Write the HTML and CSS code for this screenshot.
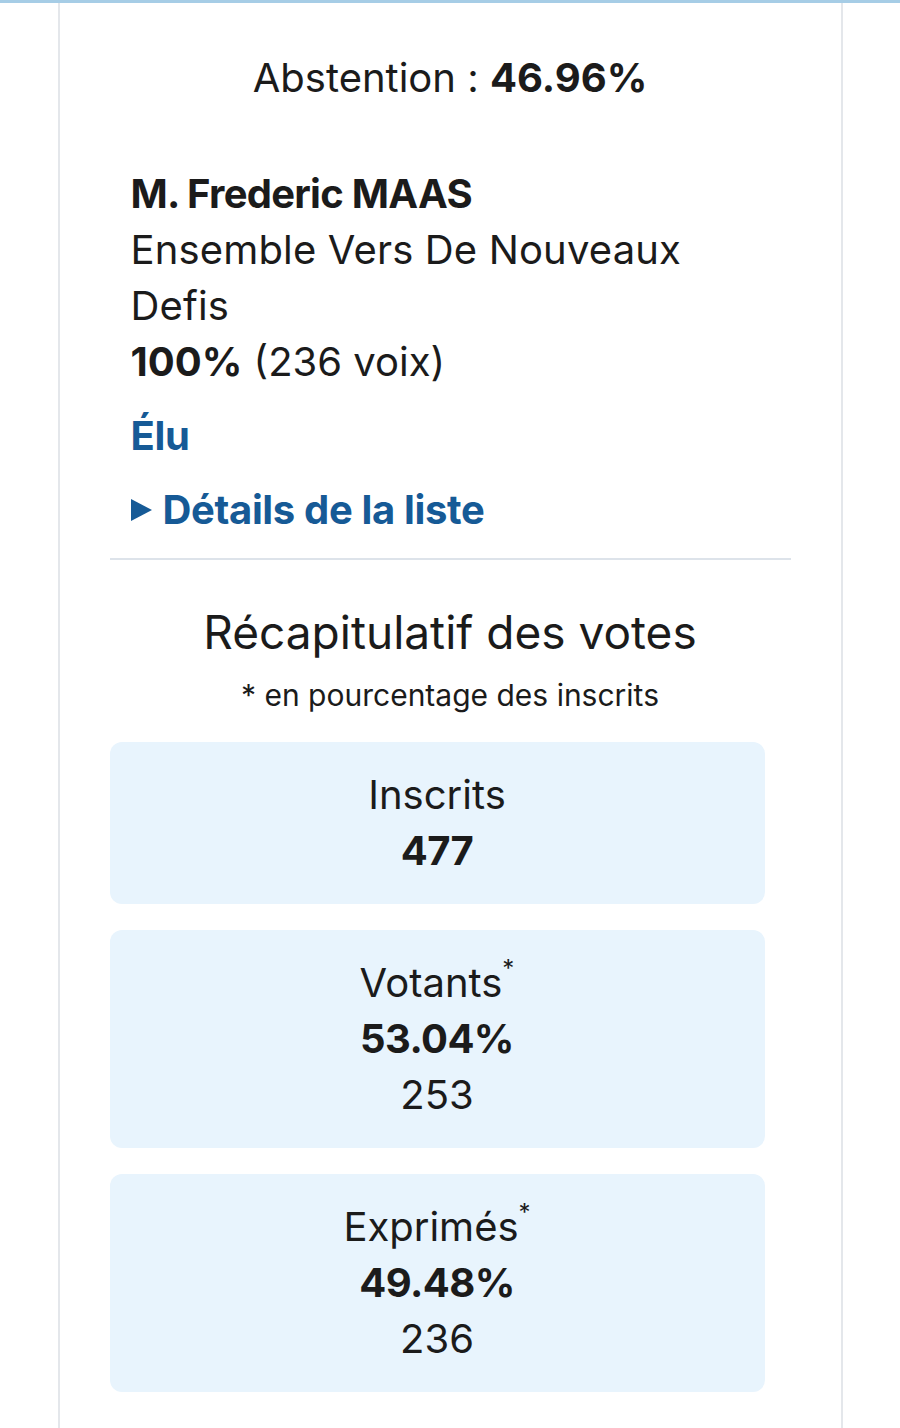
FILE: index.html
```html
<!DOCTYPE html>
<html lang="fr">
<head>
    <meta charset="UTF-8">
    <meta name="viewport" content="width=device-width, initial-scale=1.0">
    <title>Résultats</title>
    <link rel="stylesheet" href="styles.css">
</head>
<body>
    <div class="top-bar"></div>
    <main class="card">
        <p class="abstention">Abstention : <strong>46.96%</strong></p>

        <div class="candidate">
            <p class="candidate-name">M. Frederic MAAS</p>
            <p class="candidate-list">Ensemble Vers De Nouveaux Defis</p>
            <p><strong>100%</strong> (236 voix)</p>
            <p class="elected">Élu</p>
            <p class="list-details">
                <svg class="arrow" width="21" height="22" viewBox="0 0 21 22"><path d="M0 0 L21 11 L0 22 Z" fill="currentColor"/></svg>
                Détails de la liste
            </p>
        </div>

        <hr class="divider">

        <section class="summary">
            <h2>Récapitulatif des votes</h2>
            <p class="note">* en pourcentage des inscrits</p>

            <div class="stat">
                <p>Inscrits</p>
                <p><strong>477</strong></p>
            </div>
            <div class="stat">
                <p>Votants<sup>*</sup></p>
                <p><strong>53.04%</strong></p>
                <p>253</p>
            </div>
            <div class="stat">
                <p>Exprimés<sup>*</sup></p>
                <p><strong>49.48%</strong></p>
                <p>236</p>
            </div>
        </section>
    </main>
</body>
</html>
```

FILE: styles.css
```css
body {
    font-family: Inter, "Noto Sans", sans-serif;
    margin: 0;
    padding: 0;
    background: white;
    color: #1b1b1b;
}

p {
    margin: 0;
}

.top-bar {
    height: 3px;
    background: #a6cde6;
}

.card {
    width: 785px;
    box-sizing: border-box;
    margin: 0 auto;
    min-height: 1425px;
    padding: 47px 50px 0;
    border-left: 2px solid #e4e7eb;
    border-right: 2px solid #e4e7eb;
    font-size: 40px;
    line-height: 1.4;
}

.abstention {
    text-align: center;
}

.candidate {
    margin-top: 60px;
    padding: 0 30px 0 21px;
}

.candidate-name {
    font-weight: bold;
    letter-spacing: -0.75px;
}

.candidate-list {
    letter-spacing: 0.15px;
}

.elected,
.list-details {
    margin-top: 18px;
    font-weight: bold;
    letter-spacing: -0.35px;
    color: #165a96;
}

.list-details {
    display: flex;
    align-items: center;
    gap: 11px;
}

.divider {
    margin: 20px 0 0;
    border: 0;
    border-top: 2px solid #dde3ea;
}

.summary {
    text-align: center;
}

.summary h2 {
    margin: 40px 0 0;
    font-size: 46px;
    font-weight: normal;
    line-height: 1.4;
}

.note {
    margin-top: 10px;
    font-size: 30px;
}

.stat {
    width: 655px;
    box-sizing: border-box;
    margin-top: 26px;
    padding: 25px 0;
    background: #e8f4fd;
    border-radius: 12px;
}

.stat strong {
    letter-spacing: -0.6px;
}

.stat sup {
    font-size: 24px;
    line-height: 0;
    vertical-align: 20px;
}
```
